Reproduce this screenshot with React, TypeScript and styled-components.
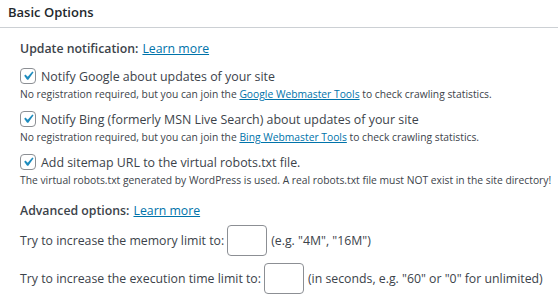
import React from 'react';
import styled, { createGlobalStyle } from 'styled-components';

const GlobalStyle = createGlobalStyle`
  body {
    margin: 0;
    background: #fff;
    font-family: "Open Sans", "Noto Sans", sans-serif;
    color: #3c434a;
  }
`;

const Box = styled.div`
  width: 558px;
  background: #fff;
`;

const Header = styled.div`
  height: 28px;
  padding: 3px 8px 0;
  box-sizing: border-box;
  border-bottom: 1px solid #ccd0d4;
  font-size: 13px;
  font-weight: 600;
  line-height: 18px;
  color: #23282d;
`;

const Body = styled.div`
  display: flex;
  flex-direction: column;
  padding: 0 20px;
`;

const SectionTitle = styled.div<{ $top: number }>`
  margin-top: ${(p) => p.$top}px;
  font-size: 12.3px;
  line-height: 20px;
  font-weight: 600;
  color: #3c434a;
  white-space: nowrap;
`;

const Link = styled.a`
  color: #0073aa;
  font-weight: 400;
  text-decoration: underline;
  margin-left: 4px;
`;

const Option = styled.div<{ $top: number }>`
  display: flex;
  flex-direction: column;
  margin-top: ${(p) => p.$top}px;
`;

const CheckRow = styled.label`
  display: flex;
  align-items: center;
  gap: 5px;
  height: 20px;
  font-size: 12.4px;
  color: #3c434a;
  white-space: nowrap;
`;

const CheckBox = styled.span`
  width: 16px;
  height: 16px;
  box-sizing: border-box;
  border: 1px solid #8c8f94;
  border-radius: 4px;
  background: #fff;
  display: flex;
  align-items: center;
  justify-content: center;
  flex-shrink: 0;
`;

const Desc = styled.div`
  font-size: 10.3px;
  line-height: 17px;
  color: #3c434a;
  white-space: nowrap;

  a {
    color: #0073aa;
    text-decoration: underline;
  }
`;

const FieldRow = styled.div<{ $top: number }>`
  display: flex;
  align-items: center;
  height: 31px;
  margin-top: ${(p) => p.$top}px;
  font-size: 12.3px;
  color: #3c434a;
  white-space: nowrap;
`;

const SmallInput = styled.input`
  width: 40px;
  height: 31px;
  box-sizing: border-box;
  margin: 0 4px 0 3px;
  border: 1px solid #8c8f94;
  border-radius: 4px;
  background: #fff;
  padding: 0 6px;
  font: inherit;
  flex-shrink: 0;
`;

const Check = () => (
  <CheckBox>
    <svg width="20" height="20" viewBox="0 0 20 20" style={{ margin: '-2px' }}>
      <path d="M14.83 4.89l1.34.94-5.81 8.38H9.02L5.78 9.67l1.34-1.25 2.570 2.4z" fill="#1e8cbe" />
    </svg>
  </CheckBox>
);

export default function App() {
  return (
    <Box>
      <GlobalStyle />
      <Header>Basic Options</Header>
      <Body>
        <SectionTitle $top={11}>
          Update notification:<Link href="#">Learn more</Link>
        </SectionTitle>
        <Option $top={7}>
          <CheckRow>
            <Check />
            Notify Google about updates of your site
          </CheckRow>
          <Desc>
            No registration required, but you can join the <a href="#">Google Webmaster Tools</a> to check crawling statistics.
          </Desc>
        </Option>
        <Option $top={6}>
          <CheckRow>
            <Check />
            Notify Bing (formerly MSN Live Search) about updates of your site
          </CheckRow>
          <Desc>
            No registration required, but you can join the <a href="#">Bing Webmaster Tools</a> to check crawling statistics.
          </Desc>
        </Option>
        <Option $top={6}>
          <CheckRow>
            <Check />
            Add sitemap URL to the virtual robots.txt file.
          </CheckRow>
          <Desc>
            The virtual robots.txt generated by WordPress is used. A real robots.txt file must NOT exist in the site directory!
          </Desc>
        </Option>
        <SectionTitle $top={12}>
          Advanced options:<Link href="#">Learn more</Link>
        </SectionTitle>
        <FieldRow $top={4}>
          Try to increase the memory limit to:
          <SmallInput type="text" />
          (e.g. "4M", "16M")
        </FieldRow>
        <FieldRow $top={7}>
          Try to increase the execution time limit to:
          <SmallInput type="text" />
          (in seconds, e.g. "60" or "0" for unlimited)
        </FieldRow>
      </Body>
    </Box>
  );
}
